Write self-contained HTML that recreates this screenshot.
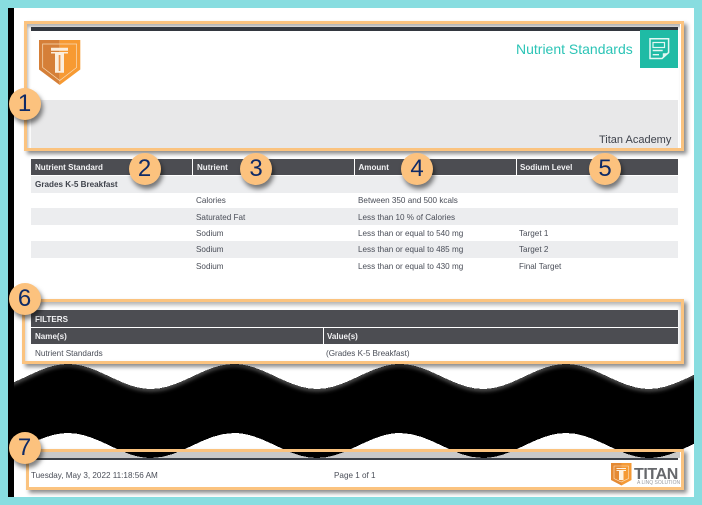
<!DOCTYPE html>
<html><head><meta charset="utf-8"><style>
html,body{margin:0;padding:0;background:#88dde0}
#p{position:relative;width:702px;height:505px;overflow:hidden;background:#88dde0;font-family:"Liberation Sans",sans-serif}
#p div{position:absolute}
.t{position:absolute;margin-top:1px;font-size:8.15px;line-height:10px;color:#4a4e58;white-space:nowrap;filter:blur(.25px)}
.h{color:#f2f2f4;font-weight:bold;font-size:8.05px}
.box{border:3px solid #fbc37f;box-sizing:border-box;box-shadow:3px 3px 4px rgba(0,0,0,.45)}
.n{width:32px;height:32px;border-radius:50%;background:#fcc27e;color:#0f2a66;font-size:24px;line-height:32px;text-align:center;box-shadow:2px 4px 5px rgba(0,0,0,.5)}
</style></head><body><div id="p">
<div style="left:8px;top:8px;width:686px;height:489px;background:#000"></div>
<div style="left:14px;top:8px;width:680px;height:489px;background:#fff"></div>

<!-- header -->
<div style="left:26px;top:24px;width:654px;height:124px;background:#fff;box-shadow:inset 2px 3px 3px rgba(0,0,0,.3)"></div>
<div style="left:31px;top:27px;width:647px;height:4px;background:#33373f"></div>
<div style="left:31px;top:100px;width:647px;height:48px;background:#e8e8e9"></div>
<svg style="position:absolute;left:39px;top:40px" width="42" height="46" viewBox="0 0 42 46">
<path d="M0 0H20.700V45L0 29.500Z" fill="#d57f38"/><path d="M20.700 0H41.300V29.500L20.700 45Z" fill="#f79a32"/>
<path d="M3.700 4H37.600V27.500L20.700 40.500L3.700 27.500Z" fill="none" stroke="#f8dcb8" stroke-width=".7"/>
<path d="M12 7.700H29V10.700H12ZM12 12H29V13.500H12ZM16 13.500H25V32.700H16Z" fill="#fbeedd"/>
<rect x="19.700" y="15" width="1.700" height="16" fill="#ea9448"/>
</svg>
<span class="t" style="left:516px;top:39px;font-size:14px;line-height:18px;color:#2cc4b6">Nutrient Standards</span>
<div style="left:640px;top:30px;width:38px;height:38px;background:#1fbba5"></div>
<svg style="position:absolute;left:640px;top:30px" width="38" height="38" viewBox="0 0 38 38">
<path d="M10 8.700H28.600V22.500L22 28.500H10Z" fill="none" stroke="#e4f7f3" stroke-width="1.500"/>
<path d="M22.800 28V23.200H28.600L22.800 28Z" fill="#e4f7f3"/>
<rect x="13" y="12.500" width="11.500" height="5" fill="none" stroke="#e4f7f3" stroke-width="1.200"/>
<path d="M12.700 20.500H22.700M12.700 24.700H19" stroke="#e4f7f3" stroke-width="1.400"/>
</svg>
<span class="t" style="left:599px;top:132.500px;font-size:11px;line-height:13px;color:#3f434c">Titan Academy</span>

<!-- table -->
<div style="left:31px;top:159px;width:647px;height:16px;background:#4c4d52"></div>
<div style="left:192px;top:159px;width:1px;height:16px;background:#fff"></div>
<div style="left:354px;top:159px;width:1px;height:16px;background:#fff"></div>
<div style="left:516px;top:159px;width:1px;height:16px;background:#fff"></div>
<div style="left:31px;top:176px;width:647px;height:17px;background:#ecedef"></div>
<div style="left:31px;top:208px;width:647px;height:17px;background:#ecedef"></div>
<div style="left:31px;top:241px;width:647px;height:17px;background:#ecedef"></div>
<span class="t h" style="left:35px;top:162px">Nutrient Standard</span>
<span class="t h" style="left:197px;top:162px">Nutrient</span>
<span class="t h" style="left:358.500px;top:162px">Amount</span>
<span class="t h" style="left:520px;top:162px">Sodium Level</span>
<span class="t" style="left:35px;top:179px;font-weight:bold;color:#3f434c">Grades K-5 Breakfast</span>
<span class="t" style="left:196px;top:195px">Calories</span>
<span class="t" style="left:358px;top:195px">Between 350 and 500 kcals</span>
<span class="t" style="left:196px;top:212px">Saturated Fat</span>
<span class="t" style="left:358px;top:212px">Less than 10 % of Calories</span>
<span class="t" style="left:196px;top:228px">Sodium</span>
<span class="t" style="left:358px;top:228px">Less than or equal to 540 mg</span>
<span class="t" style="left:519px;top:228px">Target 1</span>
<span class="t" style="left:196px;top:244px">Sodium</span>
<span class="t" style="left:358px;top:244px">Less than or equal to 485 mg</span>
<span class="t" style="left:519px;top:244px">Target 2</span>
<span class="t" style="left:196px;top:261px">Sodium</span>
<span class="t" style="left:358px;top:261px">Less than or equal to 430 mg</span>
<span class="t" style="left:519px;top:261px">Final Target</span>

<!-- filters -->
<div style="left:25px;top:302px;width:656px;height:59px;box-shadow:inset 0 3px 4px rgba(0,0,0,.3)"></div>
<div style="left:31px;top:310px;width:647px;height:17px;background:#4c4d52"></div>
<div style="left:31px;top:328px;width:647px;height:16px;background:#4c4d52"></div>
<div style="left:323px;top:328px;width:1px;height:16px;background:#fff"></div>
<span class="t h" style="left:35px;top:314px">FILTERS</span>
<span class="t h" style="left:35px;top:331px">Name(s)</span>
<span class="t h" style="left:327px;top:331px">Value(s)</span>
<span class="t" style="left:35px;top:348px">Nutrient Standards</span>
<span class="t" style="left:326px;top:348px">(Grades K-5 Breakfast)</span>

<!-- footer band under the tear -->
<div style="left:28px;top:452px;width:652px;height:6px;background:#c9c9c9"></div>
<div style="left:28px;top:458px;width:650px;height:2px;background:#3c4047"></div>

<!-- torn section -->
<svg style="position:absolute;left:14px;top:8px" width="680" height="489" viewBox="14 8 680 489">
<defs>
<filter id="b" x="-5%" y="-50%" width="110%" height="200%"><feGaussianBlur stdDeviation="2"/></filter>
<clipPath id="c"><path d="M-15 389C15 389 38 364 68 364C98 364 121 389 151 389C181 389 204 364 234 364C264 364 287 389 317 389C347 389 370 364 400 364C430 364 453 389 483 389C513 389 536 364 566 364C596 364 619 389 649 389C679 389 702 364 732 364V433C702 433 679 458 649 458C619 458 596 433 566 433C536 433 513 458 483 458C453 458 430 433 400 433C370 433 347 458 317 458C287 458 264 433 234 433C204 433 181 458 151 458C121 458 98 433 68 433C38 433 15 458 -15 458Z"/></clipPath>
</defs>
<path shape-rendering="crispEdges" d="M-15 389C15 389 38 364 68 364C98 364 121 389 151 389C181 389 204 364 234 364C264 364 287 389 317 389C347 389 370 364 400 364C430 364 453 389 483 389C513 389 536 364 566 364C596 364 619 389 649 389C679 389 702 364 732 364V433C702 433 679 458 649 458C619 458 596 433 566 433C536 433 513 458 483 458C453 458 430 433 400 433C370 433 347 458 317 458C287 458 264 433 234 433C204 433 181 458 151 458C121 458 98 433 68 433C38 433 15 458 -15 458Z" fill="#000"/>
<g clip-path="url(#c)"><path d="M-15 389C15 389 38 364 68 364C98 364 121 389 151 389C181 389 204 364 234 364C264 364 287 389 317 389C347 389 370 364 400 364C430 364 453 389 483 389C513 389 536 364 566 364C596 364 619 389 649 389C679 389 702 364 732 364" fill="none" stroke="#fff" stroke-width="4" opacity=".4" filter="url(#b)"/></g>
</svg>

<!-- footer -->
<div style="left:28px;top:460px;width:652px;height:27px;background:#fff"></div>
<span class="t" style="left:31px;top:470px">Tuesday, May 3, 2022 11:18:56 AM</span>
<span class="t" style="left:334px;top:470px">Page 1 of 1</span>
<svg style="position:absolute;left:611px;top:463px" width="21" height="23" viewBox="0 0 21 23">
<path d="M0 0H10.500V22.500L0 17Z" fill="#e58a34"/><path d="M10.500 0H20.500V17L10.500 22.500Z" fill="#f59a35"/>
<path d="M3 3H17.500V15.500L10.200 19L3 15.500Z" fill="none" stroke="#fbe3c4" stroke-width=".6"/>
<path d="M5.500 5H15V6H5.500ZM5.500 7H15V8H5.500ZM8 8H12.500V17H8Z" fill="#fdf2e2"/>
</svg>
<span class="t" style="left:634px;top:465px;font-size:16px;line-height:17px;letter-spacing:-.4px;font-weight:bold;color:#66686c">TITAN</span>
<span class="t" style="left:637px;top:478.500px;font-size:5px;line-height:6px;letter-spacing:0;color:#9a9ca0">A LINQ SOLUTION</span>

<!-- annotation boxes -->
<div class="box" style="left:24px;top:21px;width:660px;height:130px"></div>
<div class="box" style="left:22px;top:299px;width:662px;height:65px"></div>
<div class="box" style="left:26px;top:449px;width:658px;height:41px"></div>

<!-- numbers -->
<div class="n" style="left:8.500px;top:87.500px">1</div>
<div class="n" style="left:128.500px;top:153px">2</div>
<div class="n" style="left:240px;top:153px">3</div>
<div class="n" style="left:401px;top:153px">4</div>
<div class="n" style="left:589px;top:153px">5</div>
<div class="n" style="left:8.500px;top:283px">6</div>
<div class="n" style="left:8.500px;top:432px">7</div>
</div></body></html>
